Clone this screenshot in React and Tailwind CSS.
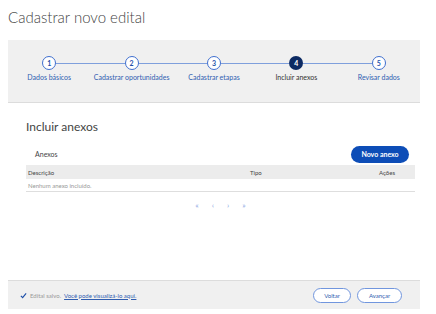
import React from "react";

const steps = [
  { n: 1, label: "Dados básicos" },
  { n: 2, label: "Cadastrar oportunidades" },
  { n: 3, label: "Cadastrar etapas" },
  { n: 4, label: "Incluir anexos", active: true },
  { n: 5, label: "Revisar dados" },
];

const Step = ({ n, label, active, first, last }) => (
  <div className="flex flex-col items-center">
    <div className="flex w-full items-center">
      <div className={`h-px flex-1 ${first ? "bg-transparent" : "bg-[#7f9fdc]"}`} />
      {active ? (
        <div className="flex h-[14px] w-[14px] items-center justify-center rounded-full bg-[#0c2a63] text-[7px] font-bold text-white">
          {n}
        </div>
      ) : (
        <div className="flex h-[14px] w-[14px] items-center justify-center rounded-full border border-[#3f6fcf] bg-white text-[7px] font-bold text-[#1d4fa8]">
          {n}
        </div>
      )}
      <div className={`h-px flex-1 ${last ? "bg-transparent" : "bg-[#7f9fdc]"}`} />
    </div>
    <span
      className={`mt-[4px] whitespace-nowrap text-[7px] leading-none ${
        active ? "text-[#333]" : "text-[#2f5db0]"
      }`}
    >
      {label}
    </span>
  </div>
);

export default function App() {
  return (
    <div
      className="flex h-[314px] flex-col bg-white pl-2 pr-4"
      style={{ fontFamily: "Lato, 'Open Sans', sans-serif" }}
    >
      {/* Header */}
      <h1 className="pt-[7px] text-[15px] font-light leading-[20px] text-[#444]">
        Cadastrar novo edital
      </h1>

      {/* Stepper */}
      <div className="mt-[13px] h-[63px] border-b border-[#dcdcdc] bg-[#f0f0f0] pt-[16px]">
        <div className="grid grid-cols-5">
          {steps.map((s, i) => (
            <Step key={s.n} {...s} first={i === 0} last={i === steps.length - 1} />
          ))}
        </div>
      </div>

      {/* Content */}
      <section className="mr-[-1px] pl-[18px] pr-[6px]">
        <h2 className="mt-[16px] text-[12px] leading-[16px] text-[#444]">Incluir anexos</h2>
        <div className="mt-[11px] flex items-center justify-between pl-[9px] pr-[6px]">
          <span className="text-[7px] text-[#444]">Anexos</span>
          <button className="h-[17px] w-[58px] rounded-full bg-[#0d4db7] text-[7px] font-bold text-white">
            Novo anexo
          </button>
        </div>
        <div className="mt-[2px] flex h-[14px] items-center bg-[#ececec] px-[2px] text-[6px] text-[#444]">
          <span className="flex-1">Descrição</span>
          <span className="w-[129px]">Tipo</span>
          <span className="pr-[18px]">Ações</span>
        </div>
        <div className="flex h-[13px] items-center border-b border-[#dedede] px-[2px] text-[6px] text-[#999]">
          Nenhum anexo incluído.
        </div>
        <div className="mt-[7px] flex justify-center gap-[13px] text-[8px] text-[#8aa6e3]">
          <span>«</span>
          <span>‹</span>
          <span>›</span>
          <span>»</span>
        </div>
      </section>

      {/* Footer */}
      <footer className="mb-[5px] mt-auto flex h-[29px] items-center justify-between border-t border-[#dcdcdc] bg-[#f0f0f0] pl-[12px] pr-[18px]">
        <div className="flex items-center gap-[3px] text-[6px]">
          <svg className="h-[7px] w-[7px] text-[#1d4fa8]" viewBox="0 0 16 16" fill="none" stroke="currentColor" strokeWidth="2.6">
            <path d="M2 9l4 4 8-10" />
          </svg>
          <span className="text-[#999]">Edital salvo.</span>
          <a className="text-[#2f5db0] underline">Você pode visualizá-lo aqui.</a>
        </div>
        <div className="flex gap-[6px]">
          <button className="h-[15px] w-[38px] rounded-full border border-[#7196de] bg-white text-[6px] text-[#2f5db0]">
            Voltar
          </button>
          <button className="h-[15px] w-[45px] rounded-full border border-[#7196de] bg-white text-[6px] text-[#2f5db0]">
            Avançar
          </button>
        </div>
      </footer>
    </div>
  );
}
